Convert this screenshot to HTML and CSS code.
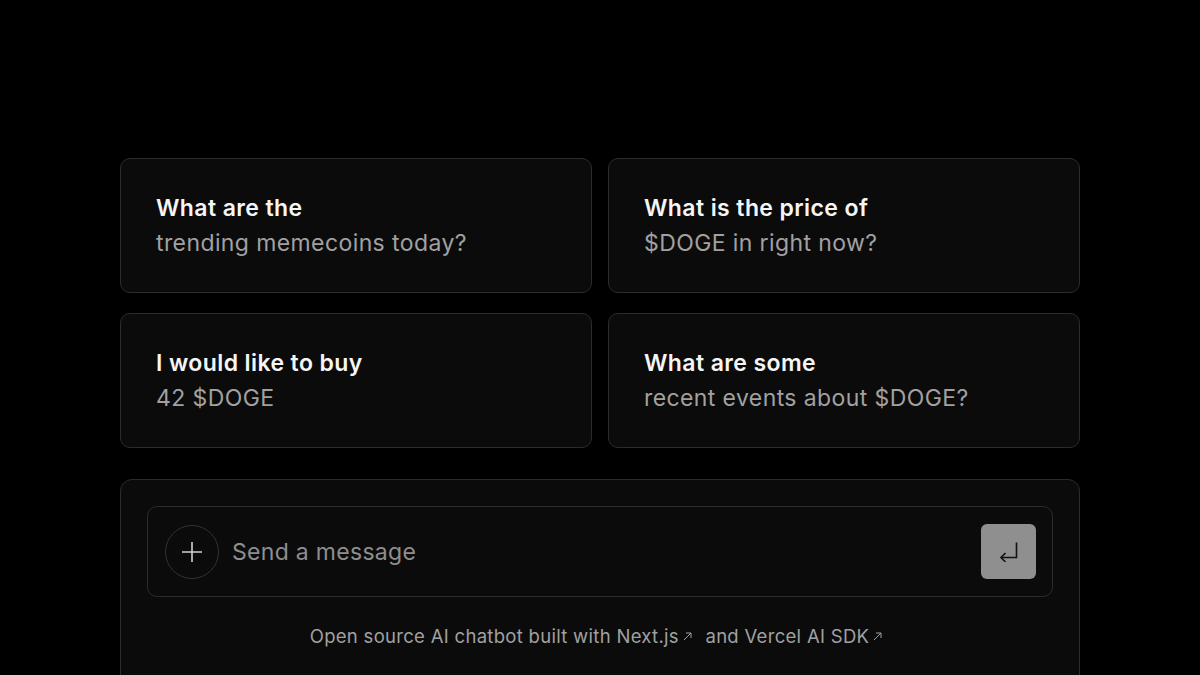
FILE: index.html
```html
<!DOCTYPE html>
<html lang="en">
<head>
    <meta charset="UTF-8">
    <meta name="viewport" content="width=device-width, initial-scale=1.0">
    <title>Chatbot</title>
    <link rel="stylesheet" href="styles.css">
</head>
<body>

    <main class="chat">

        <section class="suggestions">
            <button class="suggestion">
                <span class="suggestion-title">What are the</span>
                <span class="suggestion-sub">trending memecoins today?</span>
            </button>
            <button class="suggestion">
                <span class="suggestion-title">What is the price of</span>
                <span class="suggestion-sub">$DOGE in right now?</span>
            </button>
            <button class="suggestion">
                <span class="suggestion-title">I would like to buy</span>
                <span class="suggestion-sub">42 $DOGE</span>
            </button>
            <button class="suggestion">
                <span class="suggestion-title">What are some</span>
                <span class="suggestion-sub">recent events about $DOGE?</span>
            </button>
        </section>

        <section class="composer">
            <form class="input-box">
                <button type="button" class="attach-btn" aria-label="Add">
                    <svg width="22" height="22" viewBox="0 0 22 22" fill="none" stroke="currentColor" stroke-width="1.6">
                        <path d="M11 1v20M1 11h20"/>
                    </svg>
                </button>
                <input class="message-input" type="text" placeholder="Send a message">
                <button type="submit" class="send-btn" aria-label="Send">
                    <svg width="20" height="20" viewBox="0 0 20 20" fill="none" stroke="currentColor" stroke-width="1.6">
                        <path d="M17.5 0.5v15H2"/>
                        <path d="M6.5 11l-4.5 4.5 4.5 4.5"/>
                    </svg>
                </button>
            </form>
            <p class="footnote">
                Open source AI chatbot built with <a href="#">Next.js<svg class="ext" width="9" height="9" viewBox="0 0 9 9" fill="none" stroke="currentColor" stroke-width="1"><path d="M1 8L8 1M3 1h5v5"/></svg></a> and <a href="#">Vercel AI SDK<svg class="ext" width="9" height="9" viewBox="0 0 9 9" fill="none" stroke="currentColor" stroke-width="1"><path d="M1 8L8 1M3 1h5v5"/></svg></a>
            </p>
        </section>

    </main>

</body>
</html>
```

FILE: styles.css
```css
:root {
    --page-bg: #000000;
    --card-bg: #0b0b0b;
    --border: #2c2c2c;
    --text: #f5f5f5;
    --text-muted: #a1a1a1;
    --placeholder: #8e8e8e;
    --send-bg: #8f8f8f;
}

body {
    margin: 0;
    background-color: var(--page-bg);
    color: var(--text);
    font-family: Inter, 'Noto Sans', sans-serif;
}

.chat {
    width: 960px;
    margin: 0 auto;
    padding-top: 158px;
}

/* --- suggestion cards --- */
.suggestions {
    display: grid;
    grid-template-columns: 1fr 1fr;
    column-gap: 16px;
    row-gap: 20px;
}

.suggestion {
    display: flex;
    flex-direction: column;
    justify-content: center;
    height: 135px;
    padding: 0 35px;
    box-sizing: border-box;
    background-color: var(--card-bg);
    border: 1px solid var(--border);
    border-radius: 10px;
    text-align: left;
    font-family: inherit;
    cursor: pointer;
}
.suggestion-title { font-size: 23px; font-weight: 600; line-height: 35px; letter-spacing: 0.4px; color: var(--text); }
.suggestion-sub { font-size: 23px; font-weight: 400; line-height: 35px; letter-spacing: 0.4px; color: var(--text-muted); }

/* --- composer --- */
.composer {
    margin-top: 31px;
    padding: 26px 26px 40px;
    background-color: var(--card-bg);
    border: 1px solid var(--border);
    border-radius: 12px;
}

.input-box {
    display: flex;
    align-items: center;
    gap: 13px;
    height: 91px;
    padding: 0 16px 0 17px;
    box-sizing: border-box;
    border: 1px solid var(--border);
    border-radius: 10px;
}

.attach-btn {
    width: 54px; height: 54px; flex-shrink: 0;
    display: flex; align-items: center; justify-content: center;
    background: transparent; color: #d0d0d0;
    border: 1px solid #333; border-radius: 50%;
    padding: 0; cursor: pointer;
}

.message-input {
    flex: 1;
    background: transparent; border: none; outline: none;
    font-family: inherit; font-size: 23px; letter-spacing: 0.3px; color: var(--text);
    padding: 0;
}
.message-input::placeholder { color: var(--placeholder); }

.send-btn {
    width: 55px; height: 55px; flex-shrink: 0;
    display: flex; align-items: center; justify-content: center;
    background-color: var(--send-bg); color: #111;
    border: none; border-radius: 6px;
    padding: 0; cursor: pointer;
}

.footnote {
    margin: 27px 0 0;
    text-align: center;
    font-size: 18.5px;
    line-height: 24px;
    letter-spacing: 0.3px;
    color: var(--text-muted);
}
.footnote a { color: inherit; text-decoration: none; }
.footnote .ext { margin: 0 8px 0 4px; vertical-align: 2px; }
```
